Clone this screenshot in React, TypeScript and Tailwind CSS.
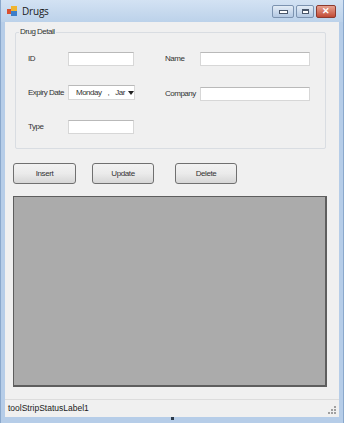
import React from 'react';

const font = { fontFamily: '"Liberation Sans", Arial, sans-serif' };

function TextBox({ className = '' }: { className?: string }) {
    return (
        <div className={`h-[14px] bg-white border border-[#d7d7d7] border-t-[#b9b9b9] ${className}`} />
    );
}

function Button({ label, className = '' }: { label: string; className?: string }) {
    return (
        <div
            className={`h-[21px] flex items-center justify-center rounded-[3px] border border-[#707070] bg-gradient-to-b from-[#f2f2f2] via-[#ebebeb] to-[#d6d6d6] text-[8px] tracking-[-0.4px] text-[#333] ${className}`}
        >
            {label}
        </div>
    );
}

export default function App() {
    return (
        <div className="w-[347px] h-[423px] bg-white flex overflow-hidden" style={font}>
            {/* Window frame */}
            <div className="w-[344px] h-[423px] flex flex-col bg-[#b6cde8] border-l border-r border-[#8aa8cc]">
                {/* Title bar */}
                <div className="h-[22px] flex items-center bg-gradient-to-b from-[#d3e2f3] to-[#bcd2ea] pl-[6px] pr-[7px]">
                    <svg width="11" height="11" viewBox="0 0 11 11">
                        <rect x="0" y="3" width="5" height="5" fill="#d9502f" />
                        <rect x="4" y="0" width="6" height="5" fill="#f0b530" />
                        <rect x="4" y="5" width="6" height="5" fill="#3d7ec9" />
                    </svg>
                    <span className="ml-[4px] text-[10px] tracking-[-0.2px] text-[#1a1a1a]" style={{ fontFamily: '"Open Sans", sans-serif' }}>
                        Drugs
                    </span>
                    <div className="ml-auto flex items-center gap-[2px]">
                        <div className="w-[22px] h-[13px] rounded-[2px] border border-[#7c93b0] bg-gradient-to-b from-[#e3ecf6] to-[#b3c8e2] flex items-end justify-center pb-[3px]">
                            <div className="w-[7px] h-[2px] bg-white border border-[#48566a] box-content" />
                        </div>
                        <div className="w-[18px] h-[13px] rounded-[2px] border border-[#7c93b0] bg-gradient-to-b from-[#e3ecf6] to-[#b3c8e2] flex items-center justify-center">
                            <div className="w-[7px] h-[5px] bg-white border border-[#48566a] border-t-2" />
                        </div>
                        <div className="w-[20px] h-[13px] rounded-[2px] border border-[#8c3a2e] bg-gradient-to-b from-[#e6a090] to-[#c14a35] flex items-center justify-center text-white text-[9px] font-bold leading-none">
                            ✕
                        </div>
                    </div>
                </div>

                {/* Client area */}
                <div className="mx-[4px] flex-1 bg-[#f0f0f0] flex flex-col text-[8px] tracking-[-0.5px] text-[#333]">
                    {/* Group box */}
                    <div className="relative mt-[10px] ml-[10px] w-[311px] h-[117px] border border-[#d9dde2] rounded-[2px]">
                        <span className="absolute -top-[5px] left-[3px] bg-[#f0f0f0] px-[1px] leading-none">
                            Drug Detail
                        </span>
                        <div className="flex mt-[18px]">
                            <div className="w-[149px] flex flex-col gap-[19px]">
                                <div className="flex items-center h-[15px]">
                                    <span className="w-[52px] pl-[12px]">ID</span>
                                    <TextBox className="w-[66px]" />
                                </div>
                                <div className="flex items-center h-[15px]">
                                    <span className="w-[52px] pl-[12px] whitespace-nowrap">Expiry Date</span>
                                    <div className="w-[67px] h-[15px] bg-white border border-[#d7d7d7] border-t-[#b9b9b9] flex items-center pl-[7px]">
                                        <span>Monday</span>
                                        <span className="ml-[6px]">,</span>
                                        <span className="ml-[6px]">Jar</span>
                                        <svg className="ml-[3px]" width="6" height="4" viewBox="0 0 6 4">
                                            <path d="M0 0 L6 0 L3 4 Z" fill="#222" />
                                        </svg>
                                    </div>
                                </div>
                                <div className="flex items-center h-[15px]">
                                    <span className="w-[52px] pl-[12px]">Type</span>
                                    <TextBox className="w-[66px]" />
                                </div>
                            </div>
                            <div className="flex flex-col gap-[19px]">
                                <div className="flex items-center h-[15px]">
                                    <span className="w-[35px]">Name</span>
                                    <TextBox className="w-[110px]" />
                                </div>
                                <div className="flex items-center h-[15px] mt-[1px]">
                                    <span className="w-[35px]">Company</span>
                                    <TextBox className="w-[110px]" />
                                </div>
                            </div>
                        </div>
                    </div>

                    {/* Buttons */}
                    <div className="flex mt-[14px] ml-[8px]">
                        <Button label="Insert" className="w-[63px]" />
                        <Button label="Update" className="w-[62px] ml-[16px]" />
                        <Button label="Delete" className="w-[62px] ml-[21px]" />
                    </div>

                    {/* Data grid */}
                    <div className="mt-[12px] ml-[8px] w-[314px] h-[191px] bg-[#ababab] border border-[#5e5e5e] border-r-2 border-b-2" />

                    {/* Status strip */}
                    <div className="mt-auto h-[18px] border-t border-[#dcdcdc] bg-[#f0f0f0] flex items-center pl-[3px] pr-[3px]">
                        <span className="text-[8.5px] tracking-normal text-[#1a1a1a]">
                            toolStripStatusLabel1
                        </span>
                        <div className="ml-auto grid grid-cols-3 gap-[1px] self-end mb-[3px]">
                            <span className="w-[2px] h-[2px]" />
                            <span className="w-[2px] h-[2px]" />
                            <span className="w-[2px] h-[2px] bg-[#a0a0a0]" />
                            <span className="w-[2px] h-[2px]" />
                            <span className="w-[2px] h-[2px] bg-[#a0a0a0]" />
                            <span className="w-[2px] h-[2px] bg-[#a0a0a0]" />
                            <span className="w-[2px] h-[2px] bg-[#a0a0a0]" />
                            <span className="w-[2px] h-[2px] bg-[#a0a0a0]" />
                            <span className="w-[2px] h-[2px] bg-[#a0a0a0]" />
                        </div>
                    </div>
                </div>

                {/* Bottom frame */}
                <div className="h-[6px] flex justify-center">
                    <div className="w-[3px] h-[3px] bg-[#2b3a4a]" />
                </div>
            </div>
        </div>
    );
}
